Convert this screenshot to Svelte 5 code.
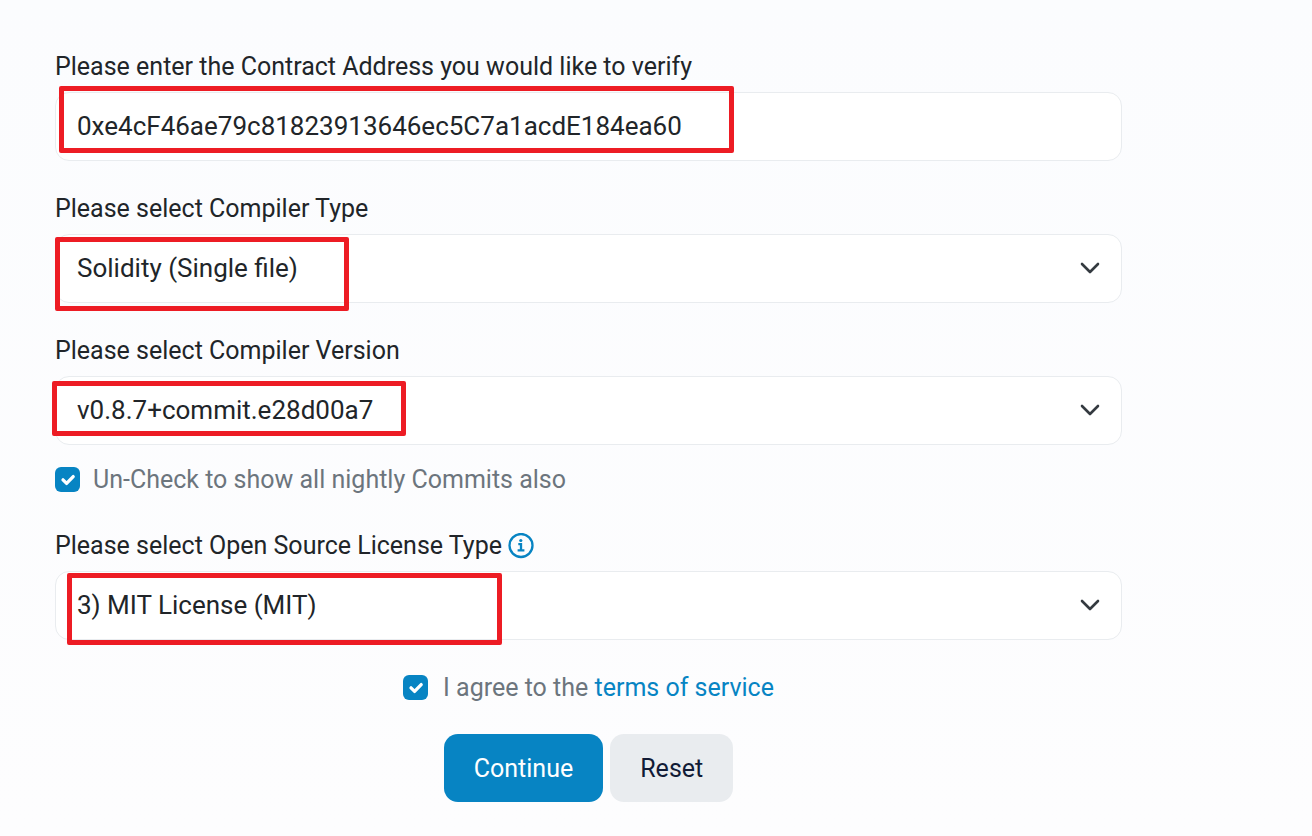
<script>
  let address = $state('0xe4cF46ae79c81823913646ec5C7a1acdE184ea60');
  let hideNightly = $state(true);
  let agreed = $state(true);
</script>

<main>
  <form onsubmit={(e) => e.preventDefault()}>
    <div class="field">
      <label for="address">Please enter the Contract Address you would like to verify</label>
      <div class="control">
        <input id="address" type="text" bind:value={address} />
        <span class="mark mark-address"></span>
      </div>
    </div>

    <div class="field">
      <label for="type">Please select Compiler Type</label>
      <div class="control">
        <select id="type"><option>Solidity (Single file)</option></select>
        <svg class="chevron" viewBox="0 0 20 12"><path d="M2 2l8 8 8-8" /></svg>
        <span class="mark mark-type"></span>
      </div>
    </div>

    <div class="field version">
      <label for="version">Please select Compiler Version</label>
      <div class="control">
        <select id="version"><option>v0.8.7+commit.e28d00a7</option></select>
        <svg class="chevron" viewBox="0 0 20 12"><path d="M2 2l8 8 8-8" /></svg>
        <span class="mark mark-version"></span>
      </div>
    </div>

    <label class="check nightly">
      <input type="checkbox" bind:checked={hideNightly} />
      <span>Un-Check to show all nightly Commits also</span>
    </label>

    <div class="field license">
      <label for="license">
        Please select Open Source License Type
        <svg class="info" viewBox="0 0 26 26">
          <circle cx="13" cy="12.5" r="11.5" />
          <path d="M10.3 11.2h2.7v6M9.6 17.3h6.8" />
          <circle class="dot" cx="12.8" cy="7.5" r="1.6" />
        </svg>
      </label>
      <div class="control">
        <select id="license"><option>3) MIT License (MIT)</option></select>
        <svg class="chevron" viewBox="0 0 20 12"><path d="M2 2l8 8 8-8" /></svg>
        <span class="mark mark-license"></span>
      </div>
    </div>

    <div class="check agree">
      <input id="agree" type="checkbox" bind:checked={agreed} />
      <label for="agree">I agree to the <a href="#terms">terms of service</a></label>
    </div>

    <div class="actions">
      <button class="primary" type="submit">Continue</button>
      <button class="secondary" type="reset">Reset</button>
    </div>
  </form>
</main>

<style>
  :global(body) {
    margin: 0;
    background: linear-gradient(#fbfcfe, #fdfdfe);
  }
  main {
    padding: 48px 190px 34px 55px;
    font-family: Roboto, sans-serif;
    font-size: 25px;
    line-height: 38px;
    color: #212529;
  }
  .field {
    margin-bottom: 29px;
  }
  .field label {
    display: flex;
    align-items: center;
    gap: 6px;
    height: 38px;
    margin-bottom: 6px;
    white-space: nowrap;
  }
  .control {
    position: relative;
  }
  .control input,
  .control select {
    display: block;
    box-sizing: border-box;
    width: 100%;
    height: 69px;
    padding: 0 21px 2px;
    border: 1px solid #e9ecef;
    border-radius: 14px;
    background: #fff;
    color: #212529;
    font: inherit;
    font-size: 26px;
    appearance: none;
  }
  .chevron {
    position: absolute;
    right: 22px;
    top: 28px;
    width: 20px;
    height: 12px;
    fill: none;
    stroke: #343a40;
    stroke-width: 2.6;
    stroke-linecap: round;
    stroke-linejoin: round;
    pointer-events: none;
  }
  .mark {
    position: absolute;
    box-sizing: border-box;
    border: 5px solid #ed1c24;
    border-radius: 2px;
    pointer-events: none;
  }
  .mark-address {
    left: 4px;
    top: -6px;
    width: 675px;
    height: 67px;
  }
  .mark-type {
    left: 0;
    top: 3px;
    width: 294px;
    height: 74px;
  }
  .mark-version {
    left: -3px;
    top: 5px;
    width: 354px;
    height: 55px;
  }
  .mark-license {
    left: 12px;
    top: 2px;
    width: 435px;
    height: 72px;
  }
  .version {
    margin-bottom: 16px;
  }
  .check {
    display: flex;
    align-items: center;
    gap: 13px;
    color: #6c757d;
  }
  .check input {
    appearance: none;
    flex: none;
    width: 25px;
    height: 25px;
    margin: 0 0 2px;
    border-radius: 6px;
    background: #0784c3;
  }
  .check input:checked {
    background: #0784c3
      url("data:image/svg+xml,%3Csvg xmlns='http://www.w3.org/2000/svg' viewBox='0 0 25 25'%3E%3Cpath d='M8 12.8l3.6 3.6 6.6-6.8' fill='none' stroke='white' stroke-width='3.3' stroke-linecap='round' stroke-linejoin='round'/%3E%3C/svg%3E")
      center / contain no-repeat;
  }
  .nightly {
    margin-bottom: 28px;
  }
  .info {
    width: 26px;
    height: 26px;
    fill: none;
    stroke: #0784c3;
    stroke-width: 2.3;
  }
  .info .dot {
    fill: #0784c3;
    stroke: none;
  }
  .agree {
    justify-content: center;
    gap: 15px;
  }
  a {
    color: #0784c3;
    text-decoration: none;
  }
  .actions {
    display: flex;
    justify-content: center;
    gap: 7px;
    margin-top: 27px;
  }
  button {
    height: 68px;
    padding: 1px 30px 0;
    border: 0;
    border-radius: 14px;
    font: inherit;
  }
  .primary {
    background: #0784c3;
    color: #fff;
  }
  .secondary {
    background: #e9ecef;
    color: #111b36;
  }
</style>
